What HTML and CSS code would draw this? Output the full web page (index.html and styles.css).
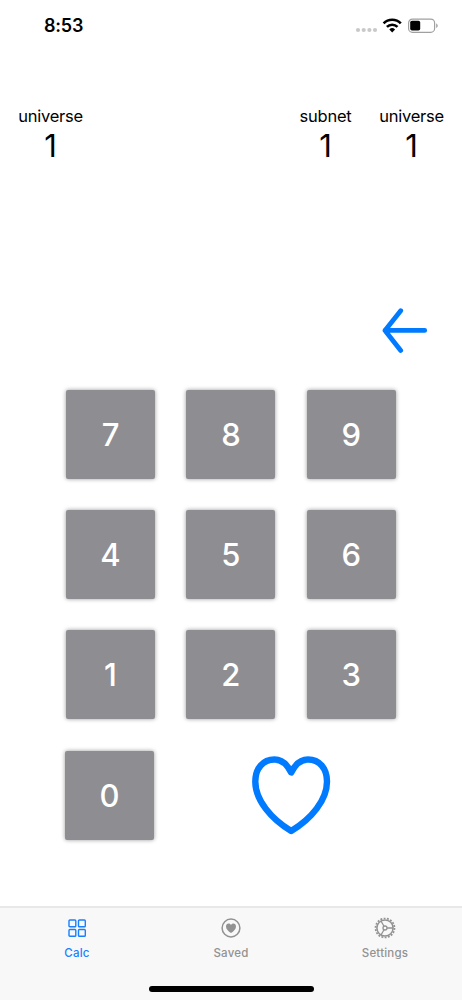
FILE: index.html
```html
<!DOCTYPE html>
<html lang="en">
<head>
<meta charset="utf-8">
<title>Calc</title>
<link rel="stylesheet" href="styles.css">
</head>
<body>
<div class="screen">
  <header class="status">
    <span class="time">8:53</span>
    <svg class="status-icons" width="84" height="18" viewBox="0 0 84 18">
      <g fill="#c9c9cb"><circle cx="3" cy="13" r="2.1"/><circle cx="8.7" cy="13" r="2.1"/><circle cx="14.4" cy="13" r="2.1"/><circle cx="20" cy="13" r="2.1"/></g>
      <g fill="none" stroke="#000" stroke-width="2.6"><path d="M28.6 6.4a12 12 0 0 1 17.2 0"/><path d="M31.9 9.900a7.500 7.500 0 0 1 10.600 0"/></g>
      <path d="M37.200 15.400l-2.900-2.900a4.200 4.200 0 0 1 5.800 0z"/>
      <rect x="53.600" y="2.100" width="26" height="13.200" rx="3.800" fill="#fff" stroke="#a0a0a0" stroke-width="1.200"/>
      <rect x="55.200" y="3.800" width="10" height="9.800" rx="1.800"/>
      <path d="M81.200 6.500c2 .7 2 3.700 0 4.400z" fill="#a0a0a0"/>
    </svg>
  </header>
  <section class="readouts">
    <div class="readout"><span class="label">universe</span><span class="value">1</span></div>
    <div class="readout subnet"><span class="label">subnet</span><span class="value">1</span></div>
    <div class="readout"><span class="label">universe</span><span class="value">1</span></div>
  </section>
  <div class="back">
    <svg width="46" height="46" viewBox="0 0 46 46" fill="none" stroke="#007aff" stroke-width="4.8" stroke-linecap="round" stroke-linejoin="round"><path d="M18.700 2.700L3 22.400l15.700 20M3 22.400h39.700"/></svg>
  </div>
  <main class="keypad">
    <button class="key">7</button><button class="key">8</button><button class="key">9</button>
    <button class="key">4</button><button class="key">5</button><button class="key">6</button>
    <button class="key">1</button><button class="key">2</button><button class="key">3</button>
  </main>
  <div class="last-row">
    <button class="key">0</button>
    <svg class="heart" width="80" height="80" viewBox="0 0 80 80" fill="none" stroke="#007aff" stroke-width="6.4" stroke-linejoin="round"><path d="M40.200 17.500C36 9 31 4.500 23.500 4.500C12 4.500 4.300 13.500 4.300 26.500C4.300 45 20 64 40.200 76C60.400 64 76 45 76 26.500C76 13.500 68.500 4.500 57 4.500C49.500 4.500 44.400 9 40.200 17.500Z"/></svg>
  </div>
  <footer class="tabbar">
    <nav class="tabs">
      <div class="tab active">
        <svg width="24" height="24" viewBox="0 0 24 24" fill="none" stroke="currentColor" stroke-width="1.400"><rect x="4" y="4" width="6.800" height="6.800" rx=".9"/><rect x="13.500" y="4" width="6.800" height="6.800" rx=".9"/><rect x="4" y="13.500" width="6.800" height="6.800" rx=".9"/><rect x="13.500" y="13.500" width="6.800" height="6.800" rx=".9"/></svg>
        <span>Calc</span>
      </div>
      <div class="tab">
        <svg width="24" height="24" viewBox="0 0 24 24"><circle cx="12" cy="12" r="8.900" fill="none" stroke="currentColor" stroke-width="1.500"/><path fill="currentColor" d="M12 9.100C12.600 8.100 13.400 7.600 14.300 7.600C15.900 7.600 17 8.800 17 10.400C17 13 14.700 15.200 12 17C9.300 15.200 7 13 7 10.400C7 8.800 8.100 7.600 9.700 7.600C10.600 7.600 11.400 8.100 12 9.100Z"/></svg>
        <span>Saved</span>
      </div>
      <div class="tab">
        <svg width="24" height="24" viewBox="0 0 24 24" fill="none" stroke="currentColor"><circle cx="12" cy="12" r="9.500" stroke-width="1.700" stroke-dasharray="1.900 1.416"/><circle cx="12" cy="12" r="8.100" stroke-width="1.500"/><circle cx="12" cy="12" r="2" stroke-width="1.300"/><path stroke-width="1.300" d="M14 12h6M11 10.300L8 5M11 13.700L8 19"/></svg>
        <span>Settings</span>
      </div>
    </nav>
    <div class="home-bar"></div>
  </footer>
</div>
</body>
</html>
```
FILE: styles.css
```css
* { box-sizing: border-box; }
body {
  margin: 0;
  background: #fff;
  color: #000;
  font-family: Inter, "Liberation Sans", sans-serif;
}
.screen {
  width: 462px;
  height: 1000px;
  display: flex;
  flex-direction: column;
  overflow: hidden;
}
.screen svg { display: block; }
.status {
  display: flex;
  justify-content: space-between;
  align-items: flex-start;
  height: 104px;
  padding: 16px 23px 0 44px;
}
.time {
  font-size: 18px;
  line-height: 20px;
  font-weight: 600;
  letter-spacing: -.2px;
}
.status-icons { margin-top: 1px; }
.readouts {
  display: flex;
  height: 204px;
  padding: 0 18px;
}
.readout {
  display: flex;
  flex-direction: column;
  align-items: center;
  width: 65px;
}
.subnet { margin-left: auto; margin-right: 21px; }
.label {
  font-size: 16.500px;
  line-height: 24px;
  letter-spacing: -.25px;
}
.value {
  font-size: 31px;
  line-height: 36px;
}
.back {
  display: flex;
  justify-content: flex-end;
  height: 81.500px;
  padding-right: 34px;
}
.keypad {
  display: grid;
  grid-template-columns: repeat(3, 89px);
  grid-auto-rows: 89px;
  gap: 31.400px;
  padding-left: 66px;
}
.key {
  width: 89px;
  height: 89px;
  padding: 0;
  border: 0;
  border-radius: 2px;
  background: #8e8d92;
  box-shadow: 0 0 4px rgba(0, 0, 0, .4);
  color: #fff;
  font: 550 31px/89px Inter, "Liberation Sans", sans-serif;
}
.last-row {
  display: flex;
  align-items: center;
  gap: 97px;
  margin-top: 31.400px;
  padding-left: 65px;
}
.tabbar {
  height: 94px;
  margin-top: auto;
  border-top: 2px solid #e8e8e8;
  background: #f8f8f8;
  display: flex;
  flex-direction: column;
  align-items: center;
}
.tabs {
  display: flex;
  width: 100%;
  height: 78px;
  padding-top: 8px;
}
.tab {
  flex: 1;
  display: flex;
  flex-direction: column;
  align-items: center;
  color: #929292;
}
.active { color: #187fff; }
.tab span {
  margin-top: 6px;
  font-size: 11.500px;
  line-height: 15px;
  font-weight: 500;
  letter-spacing: .2px;
}
.home-bar {
  width: 165px;
  height: 5.500px;
  border-radius: 3px;
  background: #000;
}
```
